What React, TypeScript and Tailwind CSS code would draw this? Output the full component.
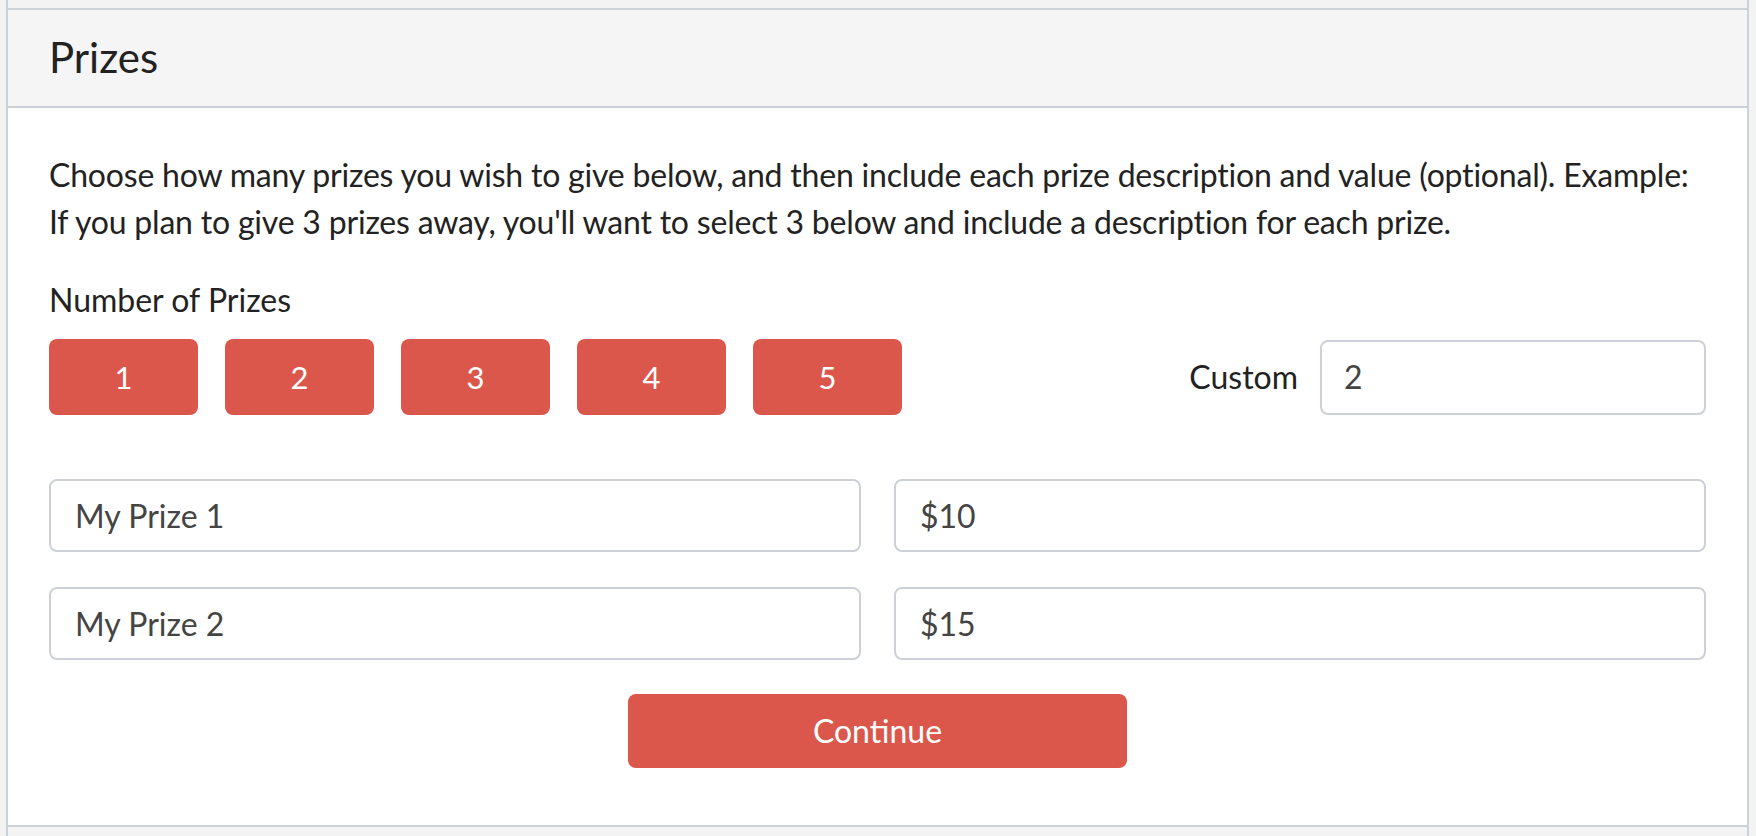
import React from 'react';

const font = { fontFamily: 'Lato, "Open Sans", "Liberation Sans", sans-serif' };

export default function App() {
  const counts = [1, 2, 3, 4, 5];
  const prizes = [
    { name: 'My Prize 1', value: '$10' },
    { name: 'My Prize 2', value: '$15' },
  ];

  return (
    <div className="w-[1756px] h-[836px] overflow-hidden bg-[#f3f3f3]" style={font}>
      <div className="ml-[6px] w-[1743px] h-full border-x-2 border-[#cdd2d8] flex flex-col">
        {/* spacer above the panel */}
        <div className="h-[8px] bg-[#f3f3f3]" />

        {/* Header */}
        <div className="h-[100px] border-y-2 border-[#cdd2d8] bg-[#f5f5f5] flex items-center px-[41px]">
          <h3 className="text-[42px] leading-none text-[#222] pb-[2px]">Prizes</h3>
        </div>

        {/* Body */}
        <div className="bg-white px-[41px] pt-[43px] pb-[57px] border-b-2 border-[#cdd2d8]">
          <p className="text-[32px] leading-[47px] tracking-[-0.2px] text-[#222] -mr-[4px]">
            Choose how many prizes you wish to give below, and then include each prize description and value (optional). Example: If you plan to give 3 prizes away, you'll want to select 3 below and include a description for each prize.
          </p>

          <div className="mt-[35px] text-[32px] leading-[40px] text-[#222]">Number of Prizes</div>

          <div className="mt-[19px] flex items-center justify-between">
            <div className="flex gap-[27px]">
              {counts.map((n) => (
                <button
                  key={n}
                  className="w-[149px] h-[76px] rounded-[8px] bg-[#dc574b] text-white text-[31px]"
                >
                  {n}
                </button>
              ))}
            </div>
            <div className="flex items-center gap-[22px]">
              <span className="text-[32px] text-[#222]">Custom</span>
              <div className="w-[386px] h-[75px] rounded-[8px] border-2 border-[#cdd1d7] flex items-center px-[22px] text-[32px] text-[#444]">
                2
              </div>
            </div>
          </div>

          <div className="mt-[64px] flex flex-col gap-[35px]">
            {prizes.map((p) => (
              <div key={p.name} className="grid grid-cols-2 gap-[33px]">
                <div className="h-[73px] rounded-[8px] border-2 border-[#cdd1d7] flex items-center px-[24px] text-[32px] text-[#444]">
                  {p.name}
                </div>
                <div className="h-[73px] rounded-[8px] border-2 border-[#cdd1d7] flex items-center px-[24px] text-[32px] text-[#444]">
                  {p.value}
                </div>
              </div>
            ))}
          </div>

          <div className="mt-[34px] flex justify-center">
            <button className="w-[499px] h-[74px] rounded-[8px] bg-[#dc574b] text-white text-[32px]">
              Continue
            </button>
          </div>
        </div>

        <div className="flex-1 bg-[#f3f3f3]" />
      </div>
    </div>
  );
}
